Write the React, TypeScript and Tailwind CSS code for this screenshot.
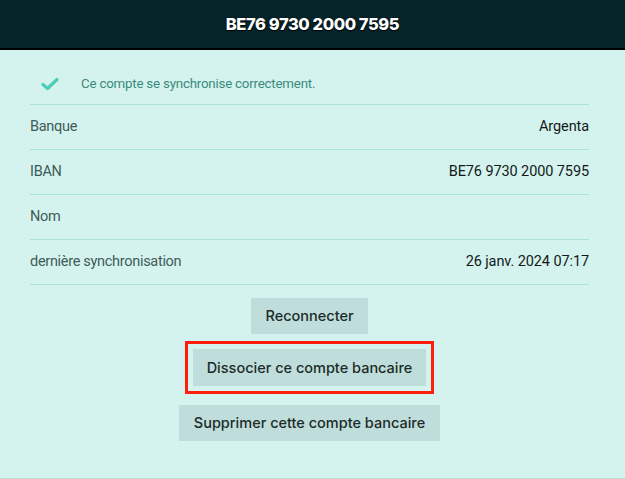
export default function App() {
  const rows = [
    { label: "Banque", value: "Argenta" },
    { label: "IBAN", value: "BE76 9730 2000 7595" },
    { label: "Nom", value: "" },
    { label: "dernière synchronisation", value: "26 janv. 2024 07:17" },
  ];
  return (
    <div className="w-[625px] h-[479px] bg-[#d5f3ee] flex flex-col" style={{ fontFamily: "Roboto, 'Liberation Sans', sans-serif" }}>
      <header className="h-[50px] bg-[#05242a] border-b-2 border-black flex items-center justify-center shrink-0">
        <h1
          className="text-white text-[16.5px] font-extrabold tracking-tight"
          style={{ fontFamily: "Inter, 'Liberation Sans', sans-serif", textShadow: "0 0 1px #000, 0 1px 1px #000" }}
        >
          BE76 9730 2000 7595
        </h1>
      </header>
      <div className="flex-1 pl-[30px] pr-[36px] pt-[13px] border-b border-[#c6d6d3]">
        <div className="h-[42px] flex items-center border-b border-[#a9e3d8]">
          <svg width="18" height="14" viewBox="0 0 18 14" className="ml-[11px]">
            <path d="M2 7.5 L6.5 11.5 L16 2.5" fill="none" stroke="#4ecdb6" strokeWidth="3.2" strokeLinecap="round" strokeLinejoin="round" />
          </svg>
          <span className="ml-[22px] text-[13.3px] text-[#3a8a7c] tracking-[-0.2px]">Ce compte se synchronise correctement.</span>
        </div>
        {rows.map((r) => (
          <div key={r.label} className="h-[45px] flex items-center justify-between border-b border-[#a9e3d8] text-[14.5px]">
            <span className="text-[#3e5c58] tracking-[-0.3px]">{r.label}</span>
            <span className="text-[#111a19] tracking-[-0.1px]">{r.value}</span>
          </div>
        ))}
        <div className="flex flex-col items-center pt-[13px] text-[#1c2b29]" style={{ fontFamily: "Inter, 'Liberation Sans', sans-serif" }}>
          <button className="h-[36px] px-[14px] bg-[#bfdedb] text-[14.5px] font-medium">Reconnecter</button>
          <div className="mt-[7px] border-[3px] border-[#ff1d0b] p-[5px]">
            <button className="h-[37px] px-[14px] bg-[#bfdedb] text-[14.5px] font-medium">Dissocier ce compte bancaire</button>
          </div>
          <button className="mt-[11px] h-[36px] px-[15px] bg-[#bfdedb] text-[14.5px] font-medium">Supprimer cette compte bancaire</button>
        </div>
      </div>
    </div>
  );
}
